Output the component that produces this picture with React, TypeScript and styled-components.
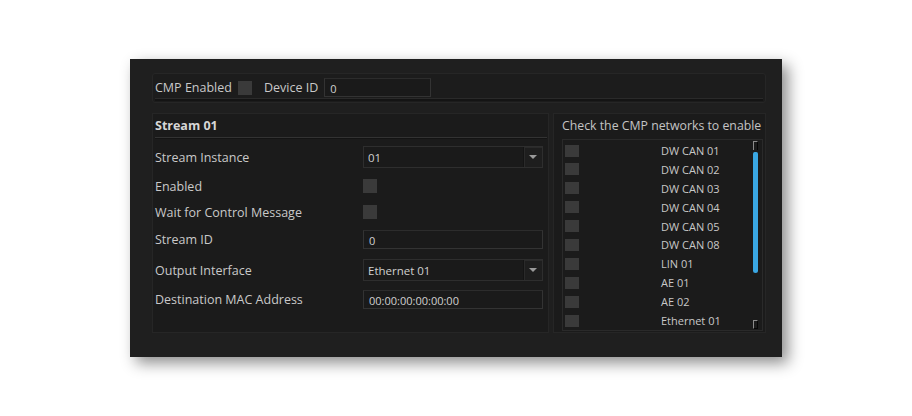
import React from "react";
import styled, { createGlobalStyle } from "styled-components";

const GlobalStyle = createGlobalStyle`
  body {
    margin: 0;
    background: #ffffff;
    font-family: "Open Sans", "Noto Sans", sans-serif;
  }
`;

const Page = styled.div`
  padding: 59px 0 0 130px;
  height: 416px;
  box-sizing: border-box;
`;

const Window = styled.div`
  width: 652px;
  height: 298px;
  box-sizing: border-box;
  background: #1f1f1f;
  padding: 14px 16px 24px 22px;
  display: flex;
  flex-direction: column;
  gap: 10px;
  box-shadow: 6px 6px 14px rgba(0, 0, 0, 0.45);
  color: #c9c9c9;
  font-size: 12.5px;
`;

const TopGroup = styled.div`
  height: 31px;
  box-sizing: border-box;
  background: #1c1c1c;
  border: 1px solid #262626;
  border-radius: 3px;
  display: flex;
  flex-direction: column;
  padding: 0 2px 1px 2px;
`;

const TopRow = styled.div`
  flex: 1;
  display: flex;
  align-items: center;
  padding-top: 3px;
`;

const HLine = styled.div`
  height: 2px;
  background: #141414;
  border-top: 1px solid #2a2a2a;
`;

const Label = styled.span<{ $ml?: number; $mr?: number }>`
  white-space: nowrap;
  margin-left: ${(p) => p.$ml ?? 0}px;
  margin-right: ${(p) => p.$mr ?? 0}px;
`;

const Check = styled.div<{ $w?: number; $h?: number }>`
  width: ${(p) => p.$w ?? 13}px;
  height: ${(p) => p.$h ?? 13}px;
  background: #3a3a3a;
  flex-shrink: 0;
`;

const TextInput = styled.div<{ $w: number }>`
  width: ${(p) => p.$w}px;
  height: 19px;
  box-sizing: border-box;
  background: #1a1a1a;
  border: 1px solid #333333;
  border-top-color: #2c2c2c;
  padding: 1px 0 0 5px;
  font-size: 11px;
  line-height: 17px;
  color: #d0d0d0;
`;

const Panels = styled.div`
  flex: 1;
  display: flex;
  gap: 4px;
`;

const Panel = styled.div<{ $w: number }>`
  width: ${(p) => p.$w}px;
  box-sizing: border-box;
  background: #1b1b1b;
  border: 1px solid #262626;
  display: flex;
  flex-direction: column;
`;

const PanelTitle = styled.div<{ $bold?: boolean }>`
  font-weight: ${(p) => (p.$bold ? 700 : 400)};
  color: ${(p) => (p.$bold ? "#d6d6d6" : "#c4c4c4")};
  padding: ${(p) => (p.$bold ? "3px 0 0 2px" : "3px 0 0 8px")};
  height: ${(p) => (p.$bold ? 22 : 20)}px;
  box-sizing: border-box;
  font-size: ${(p) => (p.$bold ? 12.5 : 12.3)}px;
  line-height: 18px;
  white-space: nowrap;
`;

const Divider = styled.div`
  margin: 1px 1px 0 2px;
  height: 1px;
  background: #333333;
  border-bottom: 1px solid #141414;
`;

const Form = styled.div`
  display: grid;
  grid-template-columns: 208px 180px;
  padding: 7px 0 0 2px;
`;

const Row = styled.div<{ $h: number }>`
  display: contents;
  & > * {
    height: ${(p) => p.$h}px;
  }
`;

const Cell = styled.div`
  display: flex;
  align-items: flex-start;
`;

const Slot = styled.div`
  height: 22px;
  display: flex;
  align-items: center;
`;

const Select = styled.div`
  width: 180px;
  height: 22px;
  box-sizing: border-box;
  background: #1a1a1a;
  border: 1px solid #2e2e2e;
  display: flex;
  align-items: center;
  padding-left: 4px;
  font-size: 11.5px;
  color: #d0d0d0;
`;

const SelectText = styled.span`
  flex: 1;
`;

const Arrow = styled.div`
  width: 18px;
  height: 20px;
  background: #1e1e1e;
  border-left: 1px solid #141414;
  box-shadow: inset 1px 1px 0 #2a2a2a;
  display: flex;
  align-items: center;
  justify-content: center;
  &::after {
    content: "";
    border-left: 4px solid transparent;
    border-right: 4px solid transparent;
    border-top: 4px solid #9a9a9a;
  }
`;

const ListBox = styled.div`
  margin: 5px 2px 1px 8px;
  flex: 1;
  background: #1b1b1b;
  border: 1px solid #2a2a2a;
  display: flex;
`;

const Items = styled.div`
  flex: 1;
  padding-top: 1px;
`;

const Item = styled.div`
  height: 18.9px;
  display: flex;
  align-items: center;
  padding-left: 2px;
`;

const ItemLabel = styled.span`
  margin-left: 82px;
  font-size: 11px;
  color: #c8c8c8;
`;

const ScrollBar = styled.div`
  width: 8px;
  display: flex;
  flex-direction: column;
  align-items: center;
  padding: 1px 0 1px 0;
  margin-right: 3px;
`;

const ScrollBtn = styled.div<{ $flip?: boolean }>`
  width: 5px;
  height: 9px;
  box-sizing: border-box;
  border: 1px solid #8a8a8a;
  border-right-color: #050505;
  ${(p) => (p.$flip ? "border-bottom-color: #050505;" : "border-bottom: none;")}
`;

const Track = styled.div`
  flex: 1;
  width: 5px;
  padding-top: 2px;
`;

const Thumb = styled.div`
  height: 121px;
  background: #3aa7e3;
  border-radius: 2px 2px 3px 3px;
`;

type Kind = "select" | "check" | "input";

const streamRows: { label: string; kind: Kind; value?: string; h: number }[] = [
  { label: "Stream Instance", kind: "select", value: "01", h: 29 },
  { label: "Enabled", kind: "check", h: 26 },
  { label: "Wait for Control Message", kind: "check", h: 27 },
  { label: "Stream ID", kind: "input", value: "0", h: 31 },
  { label: "Output Interface", kind: "select", value: "Ethernet 01", h: 29 },
  { label: "Destination MAC Address", kind: "input", value: "00:00:00:00:00:00", h: 22 },
];

const networks = [
  "DW CAN 01",
  "DW CAN 02",
  "DW CAN 03",
  "DW CAN 04",
  "DW CAN 05",
  "DW CAN 08",
  "LIN 01",
  "AE 01",
  "AE 02",
  "Ethernet 01",
];

function Control({ kind, value }: { kind: Kind; value?: string }) {
  if (kind === "select")
    return (
      <Select>
        <SelectText>{value}</SelectText>
        <Arrow />
      </Select>
    );
  if (kind === "check") return <Check $w={14} $h={14} />;
  return <TextInput $w={180}>{value}</TextInput>;
}

export default function App() {
  return (
    <Page>
      <GlobalStyle />
      <Window>
        <TopGroup>
          <TopRow>
            <Label $mr={6}>CMP Enabled</Label>
            <Check $w={14} $h={14} />
            <Label $ml={12} $mr={6}>
              Device ID
            </Label>
            <TextInput $w={107}>0</TextInput>
          </TopRow>
          <HLine />
        </TopGroup>
        <Panels>
          <Panel $w={397}>
            <PanelTitle $bold>Stream 01</PanelTitle>
            <Divider />
            <Form>
              {streamRows.map((r) => (
                <Row key={r.label} $h={r.h}>
                  <Cell>
                    <Slot>{r.label}</Slot>
                  </Cell>
                  <Cell>
                    <Slot>
                      <Control kind={r.kind} value={r.value} />
                    </Slot>
                  </Cell>
                </Row>
              ))}
            </Form>
          </Panel>
          <Panel $w={213}>
            <PanelTitle>Check the CMP networks to enable</PanelTitle>
            <ListBox>
              <Items>
                {networks.map((n) => (
                  <Item key={n}>
                    <Check $w={14} $h={12} />
                    <ItemLabel>{n}</ItemLabel>
                  </Item>
                ))}
              </Items>
              <ScrollBar>
                <ScrollBtn />
                <Track>
                  <Thumb />
                </Track>
                <ScrollBtn $flip />
              </ScrollBar>
            </ListBox>
          </Panel>
        </Panels>
      </Window>
    </Page>
  );
}
